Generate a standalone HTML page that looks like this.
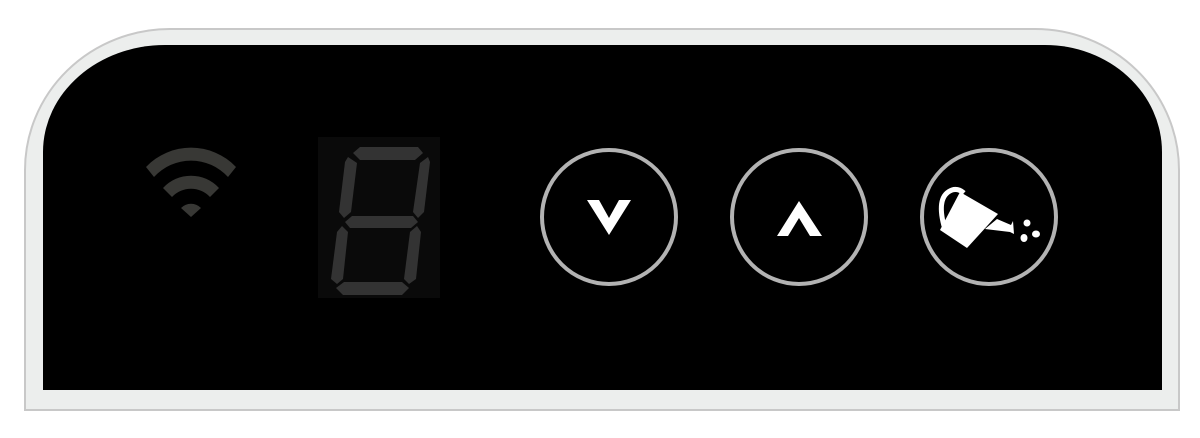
<!DOCTYPE html>
<html><head><style>
html,body{margin:0;padding:0;background:#fff;width:1200px;height:438px;overflow:hidden}
</style></head><body>
<svg width="1200" height="438" viewBox="0 0 1200 438" xmlns="http://www.w3.org/2000/svg">
<path d="M25,410 L25,170 A145,141 0 0 1 170,29 L1035,29 A144,141 0 0 1 1179,170 L1179,410 Z" fill="#eceeed" stroke="#c8c8c8" stroke-width="2"/>
<path d="M43,390 L43,152 A122,107 0 0 1 165,45 L1045,45 A117,107 0 0 1 1162,152 L1162,390 Z" fill="#000"/>
<!-- wifi -->
<g fill="#383835">
<path d="M146,167 A62,62 0 0 1 236,167 L228,177 A50,50 0 0 0 154,177 Z"/>
<path d="M163,188 A38,38 0 0 1 219,188 L210,197 A26,26 0 0 0 172,197 Z"/>
<path d="M181,208 A14,14 0 0 1 201,208 L191,217 Z"/>
</g>
<!-- digit -->
<rect x="318" y="137" width="122" height="161" fill="#0a0a0a"/>
<g fill="#333">
<polygon points="360,147 418,147 423,153 415,160 360,160 353,153"/>
<polygon points="348,157 357,163 351,212 344,218 339,212 345,162"/>
<polygon points="428,157 430,162 424,212 418,218 413,212 420,163"/>
<polygon points="352,216 413,216 418,222 411,228 350,228 345,222"/>
<polygon points="342,226 348,232 343,279 337,284 331,279 337,232"/>
<polygon points="417,226 421,232 416,279 409,284 404,279 410,232"/>
<polygon points="344,282 402,282 409,288 402,295 343,295 336,288"/>
</g>
<!-- buttons -->
<g fill="none" stroke="#b3b3b3" stroke-width="4">
<circle cx="609" cy="217" r="67"/>
<circle cx="799" cy="217" r="67"/>
<circle cx="989" cy="217" r="67"/>
</g>
<polygon points="587,200 599,200 609,218 619,200 631,200 609,235" fill="#fff"/>
<polygon points="777,236 799,201 822,236 810,236 799,218 788,236" fill="#fff"/>
<!-- watering can -->
<path d="M944,226 Q936,196 952,190 Q958,188 964,193" fill="none" stroke="#fff" stroke-width="5"/>
<g fill="#fff">
<polygon points="940,230 960,192 998,214 967,248"/>
<polygon points="997,219 1011,225 1013,221 1014,234 1010,232 985,229"/>
<ellipse cx="1027" cy="223" rx="3.5" ry="3.5"/>
<ellipse cx="1024" cy="238" rx="3.5" ry="4"/>
<ellipse cx="1036" cy="234" rx="4" ry="3.5"/>
</g>
</svg>
</body></html>
